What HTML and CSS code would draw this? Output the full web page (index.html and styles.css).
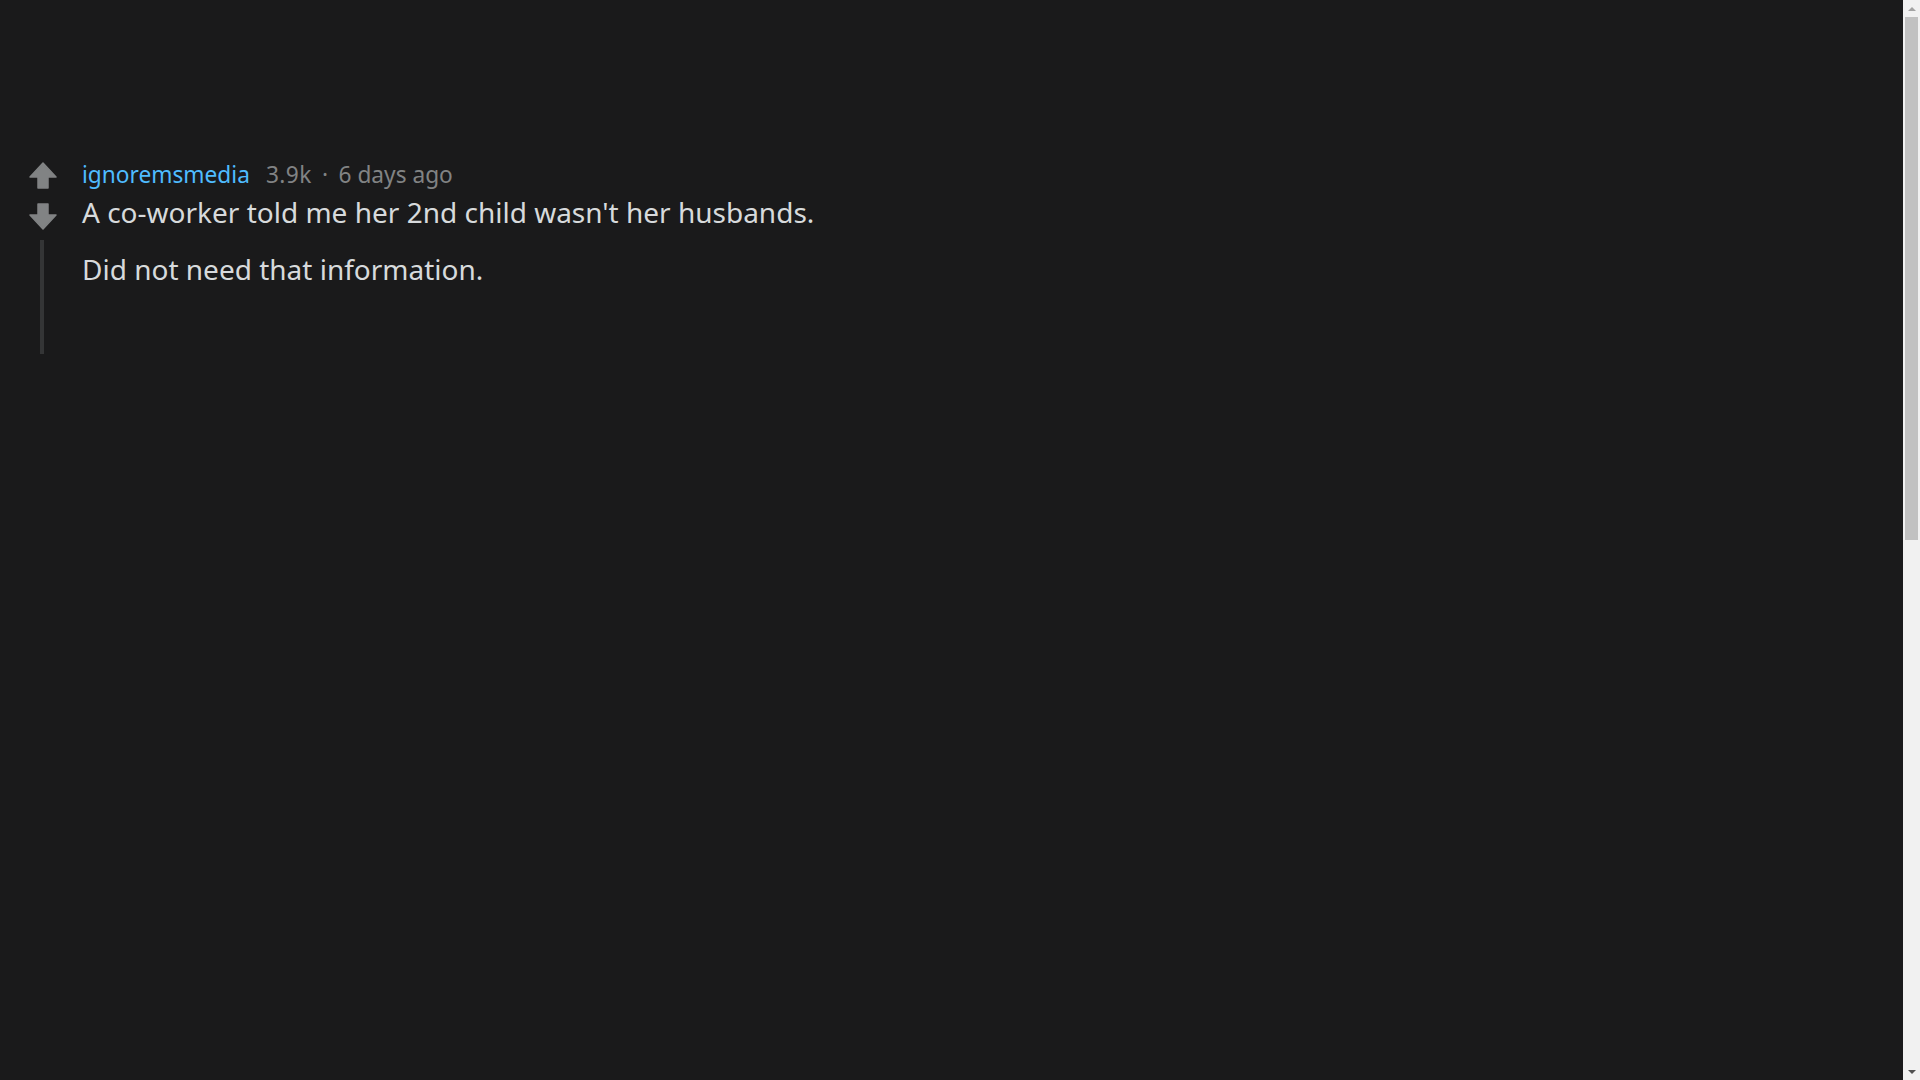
FILE: index.html
```html
<!DOCTYPE html>
<html lang="en">
<head>
<meta charset="utf-8">
<title>Comment</title>
<link rel="stylesheet" href="styles.css">
</head>
<body>
<div class="window">
  <main class="page">
    <div class="comment">
      <div class="rail">
        <svg class="vote" viewBox="0 0 28 27" width="28" height="27" aria-label="upvote">
          <path d="M14 1 L27 15 L19 15 L19 26 L9 26 L9 15 L1 15 Z" fill="#818384" stroke="#818384" stroke-width="1.5" stroke-linejoin="round"/>
        </svg>
        <svg class="vote down" viewBox="0 0 28 27" width="28" height="27" aria-label="downvote">
          <path d="M9 1 L19 1 L19 12 L27 12 L14 26 L1 12 L9 12 Z" fill="#818384" stroke="#818384" stroke-width="1.5" stroke-linejoin="round"/>
        </svg>
        <div class="thread-line"></div>
      </div>
      <div class="content">
        <div class="meta"><span class="author">ignoremsmedia</span><span class="score">3.9k</span><span class="sep"> · </span><span class="time">6 days ago</span></div>
        <div class="body">
          <p>A co-worker told me her 2nd child wasn't her husbands.</p>
          <p>Did not need that information.</p>
        </div>
      </div>
    </div>
  </main>
  <div class="scrollbar">
    <div class="sb-btn"><span class="tri up"></span></div>
    <div class="sb-track"><div class="sb-thumb"></div></div>
    <div class="sb-btn"><span class="tri down"></span></div>
  </div>
</div>
</body>
</html>
```

FILE: styles.css
```css
html, body {
  margin: 0;
  padding: 0;
  background: #1a1a1b;
  height: 100%;
  overflow: hidden;
}

body {
  font-family: "Noto Sans", "Open Sans", sans-serif;
  color: #d7dadc;
}

.window {
  display: flex;
  height: 100vh;
}

.page {
  flex: 1;
  padding-top: 161px;
  padding-left: 29px;
  box-sizing: border-box;
}

.comment {
  display: flex;
  align-items: flex-start;
}

.rail {
  width: 28px;
  display: flex;
  flex-direction: column;
  padding-top: 1px;
}

.vote {
  display: block;
}

.vote.down {
  margin-top: 14px;
}

.thread-line {
  width: 4px;
  height: 114px;
  margin-top: 10px;
  margin-left: 11px;
  background: #343536;
}

.content {
  margin-left: 25px;
}

.meta {
  font-size: 22.7px;
  line-height: 28px;
  white-space: nowrap;
  color: #818384;
}

.author {
  color: #4fbcff;
}

.score {
  margin-left: 16px;
  letter-spacing: 0.4px;
}

.sep {
  margin: 0 4.5px;
}

.body {
  margin-top: 4px;
  font-size: 28px;
  line-height: 38px;
}

.body p {
  margin: 0 0 19px 0;
}

.scrollbar {
  width: 17px;
  flex: none;
  background: #f1f1f1;
  display: flex;
  flex-direction: column;
}

.sb-btn {
  height: 17px;
  display: flex;
  align-items: center;
  justify-content: center;
  flex: none;
}

.tri {
  width: 0;
  height: 0;
  border-left: 4px solid transparent;
  border-right: 4px solid transparent;
}

.tri.up {
  border-bottom: 4px solid #a3a3a3;
}

.tri.down {
  border-top: 4px solid #505050;
}

.sb-track {
  flex: 1;
  padding: 0 2px;
}

.sb-thumb {
  height: 523px;
  background: #c1c1c1;
}
```
